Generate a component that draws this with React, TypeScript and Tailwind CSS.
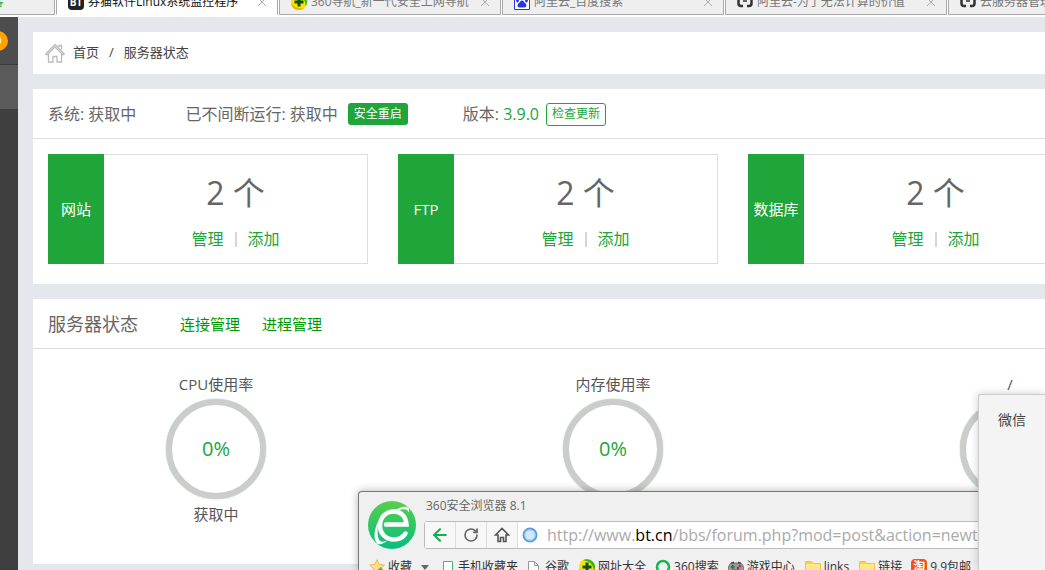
import { ArrowLeft, RotateCw } from 'lucide-react';
import type { ReactNode } from 'react';

const cards = [
  { name: '网站', count: 2 },
  { name: 'FTP', count: 2 },
  { name: '数据库', count: 2 },
];

const gauges = [
  { name: 'CPU使用率', value: 0, note: '获取中' },
  { name: '内存使用率', value: 0, note: '获取中' },
  { name: '/', value: 0, note: '获取中' },
];

function PlusBall() {
  return (
    <svg className="h-4 w-4 shrink-0" viewBox="0 0 16 16">
      <circle cx="8" cy="8" r="8" fill="#ffe100" />
      <path d="M4 1.200C9-1.500 16 2 16 8c0 2-.6 3.500-1.500 4.600C15 6 11 2 4 1.200z" fill="#2fb52a" />
      <path d="M0 9c0 4 3.500 7 8 7 2 0 3.500-.6 5-1.800C7 15 3 13 0 9z" fill="#e8b800" />
      <path d="M6.500 3.500h3v3h3v3h-3v3h-3v-3h-3v-3h3z" fill="#05551c" />
    </svg>
  );
}

function PawIcon() {
  return (
    <svg className="h-4 w-4 shrink-0" viewBox="0 0 16 16">
      <path d="M.5.5h15v15H.5z" fill="#fff" stroke="#2a35e0" />
      <ellipse cx="3.500" cy="6.500" rx="1.400" ry="2" fill="#2a35e0" />
      <ellipse cx="6.300" cy="3.700" rx="1.300" ry="1.900" fill="#2a35e0" />
      <ellipse cx="9.700" cy="3.700" rx="1.300" ry="1.900" fill="#2a35e0" />
      <ellipse cx="12.500" cy="6.500" rx="1.400" ry="2" fill="#2a35e0" />
      <path d="M8 6.500c1.500 0 2 1.700 3.300 2.800 1.700 1.400 1.500 4.200-.8 4.200h-5c-2.300 0-2.500-2.800-.8-4.200C6 8.200 6.500 6.500 8 6.500z" fill="#2a35e0" />
    </svg>
  );
}

function BracketIcon() {
  return (
    <svg className="h-4 w-4 shrink-0" viewBox="0 0 16 16" fill="none" stroke="#333" strokeWidth="2.500">
      <path d="M6 2H4Q1.500 2 1.500 5v4.500Q1.500 12 4 12h2M10 2h2q2.500 0 2.500 3v4.500Q14.500 12 12 12h-2" />
      <path d="M6 7h4" strokeWidth="1.500" />
    </svg>
  );
}

function FolderIcon() {
  return (
    <svg className="h-4 w-4 shrink-0" viewBox="0 0 16 16">
      <path d="M.5 2.500h6l1.500 2h7.500v10H.5z" fill="#ffe68a" stroke="#f0c33c" />
      <path d="M1 3h5.300l1.500 2H1z" fill="#fbd23f" />
    </svg>
  );
}

function GamepadIcon() {
  return (
    <svg className="h-4 w-4 shrink-0" viewBox="0 0 16 16">
      <path d="M4 4h8c2.500 0 4 4 4 8 0 2-2.500 2.500-4 0l-1-1.500H5L4 12c-1.500 2.500-4 2-4 0 0-4 1.500-8 4-8z" fill="#999" stroke="#555" strokeWidth=".7" />
      <path d="M3 3.500l3-1v2H3zM13 3.500l-3-1v2h3z" fill="#444" />
      <path d="M4 6h1.300v1.300h1.300v1.300H5.300v1.300H4V8.600H2.700V7.300H4z" fill="#16752b" />
      <circle cx="12" cy="7" r="1.300" fill="#e3222a" />
      <circle cx="10" cy="9" r="1" fill="#333" />
    </svg>
  );
}

function Tab({ title, icon, active }: { title: string; icon: ReactNode; active?: boolean }) {
  return (
    <div
      className={`flex h-[26px] w-[222px] shrink-0 items-center border-x border-b border-x-[#aaa] px-[11px] text-xs ${
        active ? 'border-b-white bg-white text-[#111]' : 'border-b-[#aaa] bg-[#efefef] text-[#777]'
      }`}
    >
      {icon}
      <span className="ml-1 flex-1 whitespace-nowrap">{title}</span>
      <button aria-label="关闭标签" className="text-[#aaa]">
        <svg className="h-2 w-2" viewBox="0 0 8 8" stroke="currentColor">
          <path d="M0 0l8 8M8 0L0 8" />
        </svg>
      </button>
    </div>
  );
}

function TabBar() {
  return (
    <div className="flex h-[17px] shrink-0 items-end gap-px overflow-hidden bg-white pb-[2px]">
      <div className="flex h-[26px] w-[55px] shrink-0 items-center border-r border-b border-[#aaa] bg-[#efefef] text-xs text-[#1eb34b]">
        <span className="-ml-2">客</span>
      </div>
      <Tab
        active
        title="券猫软件Linux系统监控程序"
        icon={<span className="h-4 w-4 shrink-0 rounded-sm bg-[#222] text-center text-[10px] leading-4 font-bold text-white">BT</span>}
      />
      <Tab title="360导航_新一代安全上网导航" icon={<PlusBall />} />
      <Tab title="阿里云_百度搜索" icon={<PawIcon />} />
      <Tab title="阿里云-为了无法计算的价值" icon={<BracketIcon />} />
      <Tab title="云服务器管理控制台" icon={<BracketIcon />} />
    </div>
  );
}

function Sidebar() {
  return (
    <aside className="w-[18px] shrink-0 overflow-hidden bg-[#3f3f3f]">
      <div className="flex h-12 items-center border-b border-[#3a3a3a] bg-[#4d4d4d]">
        <span className="-ml-3 h-5 w-5 shrink-0 rounded-full bg-[#ffa200] text-center text-xs leading-5 font-bold text-white">0</span>
      </div>
      <div className="h-11 bg-[#5a5a5a]" />
    </aside>
  );
}

function Breadcrumb() {
  return (
    <nav className="flex h-[42px] items-center bg-white pl-3 text-[13px] text-[#444]">
      <svg className="mr-2 h-5 w-5" viewBox="0 0 20 20" fill="none" stroke="#bbb" strokeWidth="1.300">
        <path d="M.7 11L10 1.500l9.300 9.500-1.300 1-8-8-8 8z" />
        <path d="M3.500 11v8H8v-5.500h4V19h4.500v-8M14 4V2.500h2.500v4" />
      </svg>
      <a href="#home">首页</a>
      <span className="mx-[10px]">/</span>
      <span>服务器状态</span>
    </nav>
  );
}

function SystemPanel() {
  return (
    <section className="bg-white pb-5">
      <div className="flex h-[50px] items-center border-b border-[#ddd] pt-px pl-[15px] text-base whitespace-nowrap text-[#666]">
        <span>系统: 获取中</span>
        <span className="ml-[49px]">已不间断运行: 获取中</span>
        <button className="ml-[10px] h-[22px] w-[60px] rounded-[3px] bg-[#20a53a] text-xs text-white">安全重启</button>
        <span className="ml-[55px]">
          版本: <span className="text-[#20a53a]">3.9.0</span>
        </span>
        <button className="ml-[7px] h-[23px] w-[60px] rounded-[3px] border border-[#20a53a] text-xs text-[#20a53a]">检查更新</button>
      </div>
      <div className="flex gap-[30px] overflow-hidden pt-[15px] pl-[15px]">
        {cards.map((card) => (
          <div key={card.name} className="flex h-[110px] w-80 shrink-0">
            <div className="flex w-14 items-center justify-center bg-[#20a53a] text-[15px] text-white">{card.name}</div>
            <div className="flex flex-1 flex-col items-center border border-l-0 border-[#ddd] pt-4 text-[#666]">
              <p className="text-[32px] leading-[44px]">{card.count} 个</p>
              <div className="mt-3 flex items-center text-base leading-6 text-[#20a53a]">
                <a href="#manage">管理</a>
                <span className="mx-[11px] h-[15px] w-[2px] bg-[#d3d6e2]" />
                <a href="#add">添加</a>
              </div>
            </div>
          </div>
        ))}
      </div>
    </section>
  );
}

function StatusPanel() {
  return (
    <section className="bg-white pb-[38px]">
      <div className="flex h-[50px] items-center border-b border-[#ddd] pt-px pl-[15px] whitespace-nowrap">
        <h2 className="text-lg text-[#666]">服务器状态</h2>
        <a href="#connections" className="ml-[42px] text-[15px] text-[#090]">连接管理</a>
        <a href="#processes" className="ml-[22px] text-[15px] text-[#090]">进程管理</a>
      </div>
      <div className="flex gap-[31px] overflow-hidden pt-6 text-[15px] text-[#555]">
        {gauges.map((gauge) => (
          <div key={gauge.name} className="flex w-[366px] shrink-0 flex-col items-center">
            <span className="leading-[22px]">{gauge.name}</span>
            <div className="mt-1 mb-[3px] flex h-[100px] w-[100px] items-center justify-center rounded-full border-[6px] border-[#ccc] text-xl text-[#20a53a] shadow-[0_0_1px_#20a53a]">
              {gauge.value}%
            </div>
            <span className="leading-6">{gauge.note}</span>
          </div>
        ))}
      </div>
    </section>
  );
}

function BrowserLogo() {
  return (
    <svg className="h-12 w-12" viewBox="0 0 48 48">
      <defs>
        <linearGradient id="logo" x1="0" y1="0" x2="0" y2="1">
          <stop offset="0" stopColor="#58cf4b" />
          <stop offset="1" stopColor="#06bd83" />
        </linearGradient>
      </defs>
      <circle cx="24" cy="24" r="24" fill="url(#logo)" />
      <path
        d="M18 23.500h20.500C38 15.500 33 10.500 26 10.500c-8.500 0-14 6-14 14 0 8.500 6 14 14 14 5 0 9-2 11.500-6"
        fill="none"
        stroke="#fff"
        strokeWidth="4.500"
        strokeLinecap="round"
      />
      <path d="M27 9.500c4-3 9-5 13-3 1.500 1 1.500 3 .5 5-.5-2.500-2.500-3.500-5-3.200-3 .3-5 1.200-8.500 1.200z" fill="#fff" />
      <path d="M10.500 20C6 28 5 38 9 42.500c2.500 2 7.500 0 11-3.500-4 2-7.500 2.500-9-.5-2-4-1.500-12-.5-18.500z" fill="#fff" />
    </svg>
  );
}

function Bookmarks() {
  return (
    <div className="flex h-[26px] items-center overflow-hidden pl-[10px] text-xs whitespace-nowrap text-[#333]">
      <svg className="h-4 w-4 shrink-0" viewBox="0 0 16 16">
        <path d="M8 .8l2.200 4.700 5.100.6-3.800 3.500 1 5.100L8 12.200l-4.500 2.500 1-5.100L.7 6.100l5.100-.6z" fill="#ffe08a" stroke="#efb63d" />
        <path d="M11.500 8l4 4h-2v3h-4v-3h-2z" fill="#4cba58" />
      </svg>
      <a href="#fav" className="ml-[3px]">收藏</a>
      <svg className="mx-[9px] h-[5px] w-2 shrink-0" viewBox="0 0 8 5" fill="#666">
        <path d="M0 0h8L4 5z" />
      </svg>
      <svg className="ml-1 h-4 w-3 shrink-0" viewBox="0 0 12 16" fill="#fff" stroke="#3cb878">
        <path d="M1.500 2.500h9v13h-9z" />
      </svg>
      <a href="#mobile" className="ml-1">手机收藏夹</a>
      <svg className="ml-[10px] h-4 w-3 shrink-0" viewBox="0 0 12 16" fill="#fff" stroke="#999">
        <path d="M.5 2.500h6l4 4v9H.5zM6.500 2.500v4h4" />
      </svg>
      <a href="#google" className="mr-[10px] ml-[5px]">谷歌</a>
      <PlusBall />
      <a href="#sites" className="mr-[9px] ml-[3px]">网址大全</a>
      <svg className="h-4 w-4 shrink-0" viewBox="0 0 16 16" fill="none" strokeWidth="2.500">
        <circle cx="8" cy="8" r="6" stroke="#19b45a" />
        <path d="M12 12.500a6 6 0 0 1-8 0" stroke="#f6a51c" />
      </svg>
      <a href="#search" className="mr-[9px] ml-[3px]">360搜索</a>
      <GamepadIcon />
      <a href="#games" className="mr-[10px] ml-[3px]">游戏中心</a>
      <FolderIcon />
      <a href="#links" className="mr-[10px] ml-[3px]">links</a>
      <FolderIcon />
      <a href="#link" className="mr-[9px] ml-[3px]">链接</a>
      <span className="h-4 w-4 shrink-0 rounded-sm bg-[#f4511e] text-center text-xs leading-4 font-bold text-white">淘</span>
      <a href="#deals" className="ml-[3px]">9.9包邮</a>
    </div>
  );
}

function BrowserWindow() {
  return (
    <div className="absolute top-[491px] right-0 bottom-0 left-[358px] overflow-hidden rounded-tl-sm border-t border-l border-[#777] bg-[#f0f0f0] shadow-[0_0_8px_rgba(0,0,0,0.3)]">
      <div className="flex h-[62px] pt-[9px] pl-[9px]">
        <BrowserLogo />
        <div className="ml-2 flex-1">
          <p className="-mt-1 pl-[2px] text-xs leading-[18px] text-[#666]">360安全浏览器 8.1</p>
          <div className="mt-[6px] flex h-7 rounded-l-[3px] border border-[#bbb] bg-white">
            <button aria-label="后退" className="flex w-[31px] items-center justify-center border-r border-[#ddd] bg-[#f7f7f7]">
              <ArrowLeft className="h-5 w-5 text-[#12b04c]" strokeWidth={2.5} />
            </button>
            <button aria-label="刷新" className="flex w-[31px] items-center justify-center border-r border-[#ddd] bg-[#f7f7f7]">
              <RotateCw className="h-4 w-4 text-[#666]" strokeWidth={2.5} />
            </button>
            <button aria-label="主页" className="flex w-[31px] items-center justify-center border-r border-[#ddd] bg-[#f7f7f7]">
              <svg className="h-4 w-4" viewBox="0 0 16 16" fill="none" stroke="#555" strokeWidth="1.600">
                <path d="M1.500 8L8 1.500 14.500 8H12v6.500H9.500v-4h-3v4H4V8z" />
              </svg>
            </button>
            <svg className="mt-[5px] ml-1 h-4 w-4" viewBox="0 0 16 16">
              <circle cx="8" cy="8" r="6.500" fill="#d3e9fb" stroke="#5b9ce0" strokeWidth="2" />
              <circle cx="8" cy="8" r="5" fill="none" stroke="#a5d0f5" />
            </svg>
            <span className="ml-[9px] overflow-hidden text-base leading-[26px] whitespace-nowrap text-[#aaa]">
              http://www.<span className="text-black">bt.cn</span>/bbs/forum.php?mod=post&amp;action=newt
            </span>
          </div>
        </div>
      </div>
      <Bookmarks />
    </div>
  );
}

export default function App() {
  return (
    <div className="relative flex h-screen flex-col overflow-hidden bg-[#e4e8ed] font-['Open_Sans','Noto_Sans_CJK_SC',sans-serif]">
      <TabBar />
      <div className="flex min-h-0 flex-1">
        <Sidebar />
        <main className="flex min-w-0 flex-1 flex-col gap-[15px] pt-[15px] pl-[15px]">
          <Breadcrumb />
          <SystemPanel />
          <StatusPanel />
        </main>
      </div>
      <BrowserWindow />
      <div className="absolute top-[394px] right-0 bottom-0 left-[978px] rounded-tl-[3px] border-t border-l border-[#ccc] bg-[#f4f4f4] pt-[14px] pl-[19px] text-sm leading-[22px] text-[#444] shadow-[0_0_8px_rgba(0,0,0,0.2)]">
        微信
      </div>
    </div>
  );
}
